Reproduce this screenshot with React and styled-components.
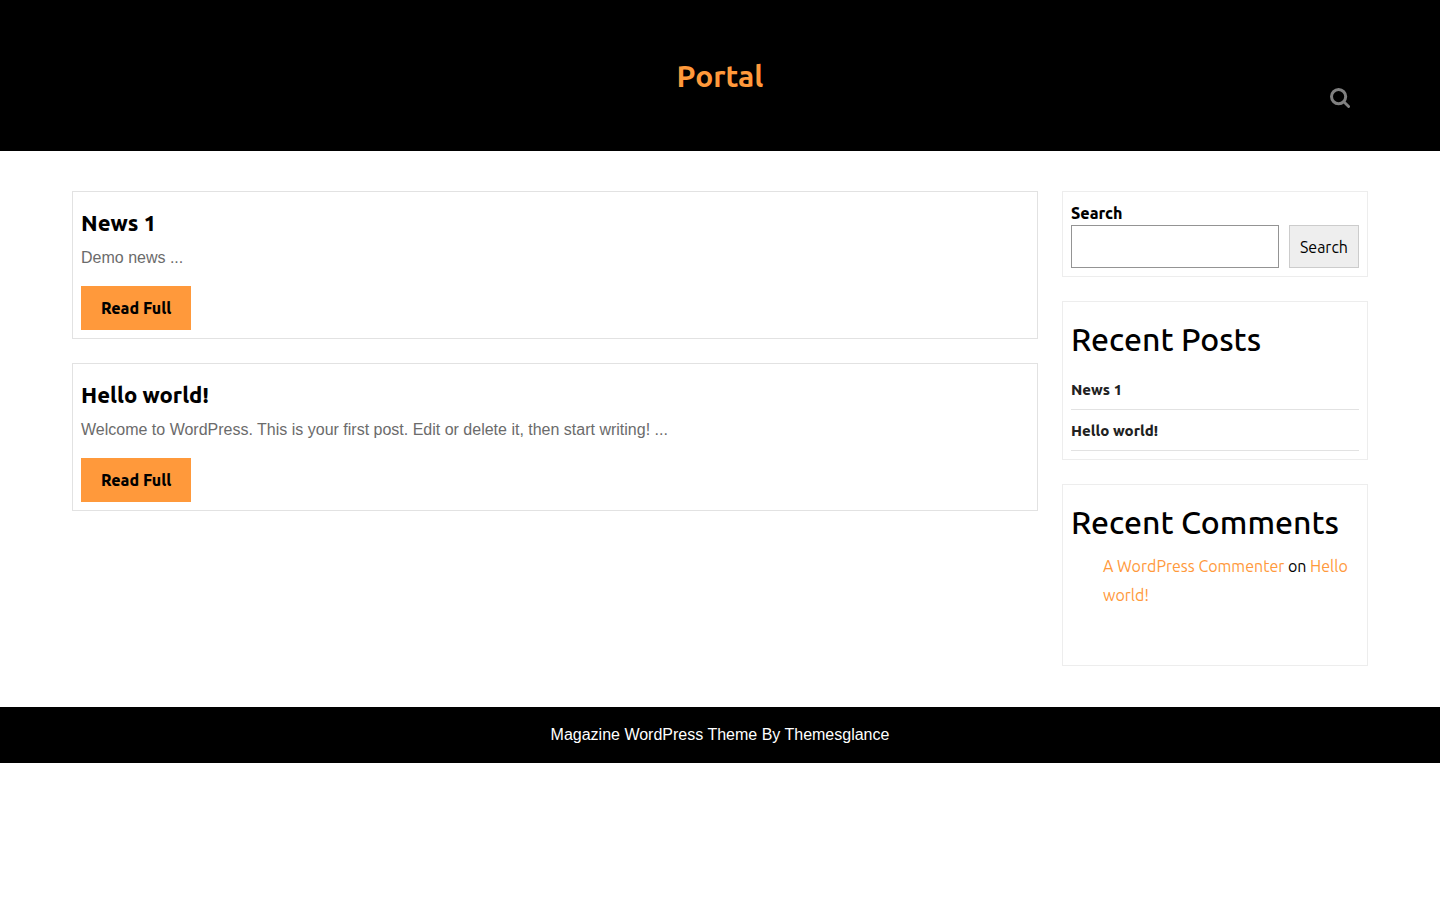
import React from 'react';
import styled, { createGlobalStyle } from 'styled-components';

const accent = '#ff993b';
const display = 'Ubuntu, "Noto Sans", "Open Sans", sans-serif';
const body = '"Liberation Sans", Arial, sans-serif';

const GlobalStyle = createGlobalStyle`
  *, *::before, *::after { box-sizing: border-box; }
  body { margin: 0; background: #fff; color: #000; font: 400 16px/24px ${body}; }
  h1, h2, h3, p, ul, ol { margin: 0; padding: 0; }
  ul, ol { list-style: none; }
  a { color: inherit; text-decoration: none; }
`;

const Header = styled.header`
  display: grid;
  grid-template-columns: 1fr auto 1fr;
  align-items: center;
  padding: 56px 90px 43px;
  background: #000;
`;

const SiteTitle = styled.h1`
  grid-column: 2;
  padding-bottom: 12px;
  font: 600 30px/40px ${display};
  color: ${accent};
`;

const SearchToggle = styled.button`
  display: flex;
  justify-self: end;
  align-self: end;
  padding: 0;
  border: 0;
  background: none;
  color: #808080;
  cursor: pointer;
`;

const Main = styled.main`
  display: grid;
  grid-template-columns: repeat(12, minmax(0, 1fr));
  gap: 24px;
  align-items: start;
  padding: 40px 5% 41px;
`;

const Column = styled.div`
  grid-column: span ${(p) => p.$span};
  display: grid;
  grid-template-columns: minmax(0, 1fr);
  gap: 24px;
`;

const Post = styled.article`
  padding: 8px;
  border: 1px solid #e2e2e2;
`;

const PostTitle = styled.h2`
  margin: 8px 0;
  font: 800 22px/30px ${display};
`;

const Excerpt = styled.p`
  margin-bottom: 16px;
  color: #6b6b6b;
`;

const ReadMore = styled.a`
  display: inline-block;
  padding: 10px 20px;
  background: ${accent};
  font: 800 16px/24px ${display};
  vertical-align: top;
`;

const Widget = styled.section`
  padding: 8px;
  border: 1px solid #ededed;
  font: 400 16px/24px ${display};
`;

const WidgetTitle = styled.h2`
  margin: 10px 0 11px;
  font: 500 32px/38px ${display};
`;

const SearchLabel = styled.label`
  display: block;
  padding-top: 1px;
  font-weight: 800;
`;

const SearchRow = styled.div`
  display: flex;
  gap: 10px;
`;

const SearchInput = styled.input`
  flex: 1;
  min-width: 0;
  height: 43px;
  padding: 8px;
  border: 1px solid #949494;
  font: inherit;
`;

const SearchButton = styled.button`
  padding: 0 10px;
  border: 1px solid #ccc;
  background: #eee;
  color: #000;
  font: inherit;
`;

const PostLink = styled.li`
  padding: 9px 0 7px;
  border-bottom: 1px solid #e2e2e2;
  color: #222;
  font: 800 15px/24px ${display};
`;

const Comments = styled.ol`
  padding: 0 0 47px 32px;
  line-height: 29px;
  a { color: ${accent}; }
`;

const Footer = styled.footer`
  padding: 16px;
  background: #000;
  color: #fff;
  text-align: center;
`;

const posts = [
  { title: 'News 1', text: 'Demo news ...' },
  {
    title: 'Hello world!',
    text: 'Welcome to WordPress. This is your first post. Edit or delete it, then start writing! ...',
  },
];

export default function App() {
  return (
    <>
      <GlobalStyle />
      <Header>
        <SiteTitle><a href="#home">Portal</a></SiteTitle>
        <SearchToggle type="button" aria-label="Open search">
          <svg width="20" height="20" viewBox="0 0 20 20" fill="none" stroke="currentColor">
            <circle cx="8.6" cy="8.6" r="7.1" strokeWidth="3" />
            <path d="M13.8 13.8 L18.6 18.6" strokeWidth="2.8" strokeLinecap="round" />
          </svg>
        </SearchToggle>
      </Header>
      <Main>
        <Column $span={9}>
          {posts.map((post) => (
            <Post key={post.title}>
              <PostTitle><a href="#post">{post.title}</a></PostTitle>
              <Excerpt>{post.text}</Excerpt>
              <ReadMore href="#post">Read Full</ReadMore>
            </Post>
          ))}
        </Column>
        <Column as="aside" $span={3}>
          <Widget as="form" role="search">
            <SearchLabel htmlFor="site-search">Search</SearchLabel>
            <SearchRow>
              <SearchInput id="site-search" type="search" />
              <SearchButton type="button">Search</SearchButton>
            </SearchRow>
          </Widget>
          <Widget>
            <WidgetTitle>Recent Posts</WidgetTitle>
            <ul>
              {posts.map((post) => (
                <PostLink key={post.title}><a href="#post">{post.title}</a></PostLink>
              ))}
            </ul>
          </Widget>
          <Widget>
            <WidgetTitle>Recent Comments</WidgetTitle>
            <Comments>
              <li>
                <a href="#commenter">A WordPress Commenter</a> on <a href="#post">Hello world!</a>
              </li>
            </Comments>
          </Widget>
        </Column>
      </Main>
      <Footer><a href="#theme">Magazine WordPress Theme By Themesglance</a></Footer>
    </>
  );
}
